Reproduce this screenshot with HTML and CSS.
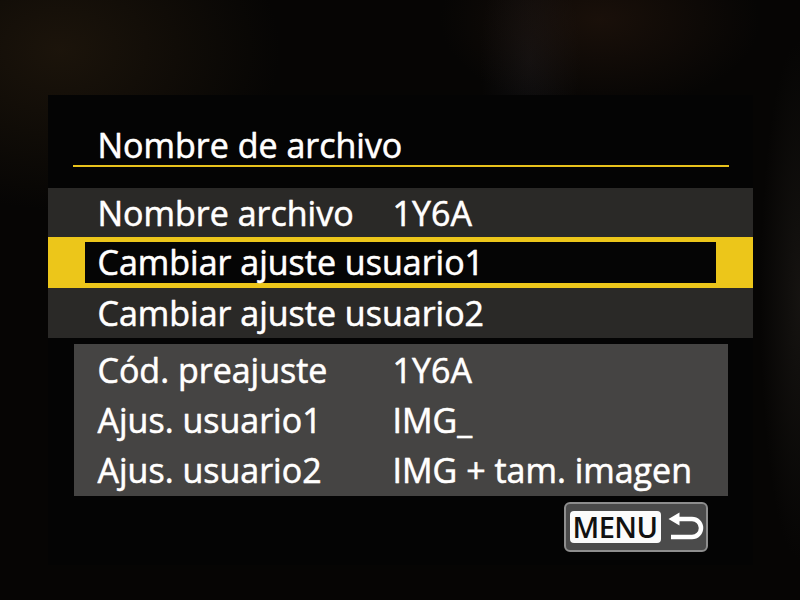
FILE: index.html
```html
<!DOCTYPE html>
<html lang="es">
<head>
    <meta charset="UTF-8">
    <meta name="viewport" content="width=device-width, initial-scale=1.0">
    <title>Nombre de archivo</title>
    <link rel="stylesheet" href="styles.css">
</head>
<body>
    <div class="screen">
        <div class="title">
            <h1>Nombre de archivo</h1>
        </div>

        <!-- Menu items -->
        <div class="menu">
            <div class="item">
                <span class="label">Nombre archivo</span>
                <span class="value">1Y6A</span>
            </div>
            <div class="item selected">
                <div class="cursor">Cambiar ajuste usuario1</div>
            </div>
            <div class="item">
                <span>Cambiar ajuste usuario2</span>
            </div>
        </div>

        <!-- Current settings -->
        <div class="info">
            <div class="info-row">
                <span class="label">Cód. preajuste</span>
                <span class="value">1Y6A</span>
            </div>
            <div class="info-row">
                <span class="label">Ajus. usuario1</span>
                <span class="value">IMG_</span>
            </div>
            <div class="info-row">
                <span class="label">Ajus. usuario2</span>
                <span class="value">IMG + tam. imagen</span>
            </div>
        </div>

        <div class="footer">
            <div class="menu-btn">
                <span class="menu-key">MENU</span>
                <svg class="back" width="36" height="34" viewBox="0 0 36 34">
                    <path d="M0.5 7 L11.5 0.5 L11.5 13.5 Z" fill="#fff"/>
                    <path d="M10 7 H24 A9 9 0 0 1 24 25 H3" fill="none" stroke="#fff" stroke-width="4.5"/>
                </svg>
            </div>
        </div>
    </div>
</body>
</html>
```

FILE: styles.css
```css
body {
    margin: 0;
    height: 600px;
    overflow: hidden;
    font-family: "Open Sans", "Noto Sans", sans-serif;
    color: #fff;
    background-color: #060504;
    background-image:
        radial-gradient(ellipse 220px 160px at 60px 50px, rgba(45, 32, 16, 0.55), transparent),
        radial-gradient(ellipse 160px 90px at 600px 20px, rgba(55, 32, 18, 0.4), transparent),
        radial-gradient(ellipse 50px 120px at 530px 60px, rgba(32, 32, 38, 0.35), transparent),
        radial-gradient(ellipse 40px 260px at 800px 300px, rgba(40, 36, 32, 0.45), transparent);
}

.screen {
    width: 705px;
    height: 470px;
    margin: 95px auto 0;
    background-color: #040404;
    text-shadow: 0 0 1px rgba(255, 225, 190, 0.6);
    -webkit-text-stroke: 0.4px #fff;
    white-space: nowrap;
}

/* Title with yellow rule */
.title {
    margin: 0 24px 0 25px;
    height: 72px;
    border-bottom: 2px solid #e8c21c;
    box-sizing: border-box;
    display: flex;
    align-items: flex-end;
}

h1 {
    margin: 0 0 0 25px;
    font-size: 34px;
    font-weight: 400;
    line-height: 40px;
}

.menu {
    margin-top: 21px;
}

.item {
    display: flex;
    align-items: center;
    height: 50px;
    padding-left: 50px;
    font-size: 34px;
    background-color: #2a2927;
}

.item:first-child {
    height: 49px;
}

.item .label {
    width: 295px;
}

.item.selected {
    height: 51px;
    padding: 5px 37px;
    box-sizing: border-box;
    background-color: #ecc61a;
}

.cursor {
    flex: 1;
    height: 41px;
    padding-left: 13px;
    line-height: 41px;
    background-color: #050505;
}

/* Info panel */
.info {
    margin: 6px 25px 0 26px;
    height: 152px;
    padding-left: 24px;
    display: flex;
    flex-direction: column;
    justify-content: center;
    background-color: #454443;
}

.info-row {
    display: flex;
    align-items: center;
    height: 50px;
    font-size: 34px;
}

.info-row .label {
    width: 295px;
}

.footer {
    display: flex;
    justify-content: flex-end;
    padding: 6px 45px 0 0;
}

.menu-btn {
    display: flex;
    align-items: center;
    gap: 7px;
    width: 144px;
    height: 50px;
    padding-left: 4px;
    box-sizing: border-box;
    border: 2px solid #8e8e8e;
    border-radius: 6px;
    background-color: #4b4b4b;
    text-shadow: none;
    -webkit-text-stroke: 0;
}

.menu-key {
    width: 91px;
    height: 32px;
    border-radius: 4px;
    background-color: #fbfbfb;
    color: #111;
    font-size: 29px;
    font-weight: 600;
    line-height: 32px;
    text-align: center;
    letter-spacing: -0.5px;
}

.back {
    margin-top: 3px;
}
```
